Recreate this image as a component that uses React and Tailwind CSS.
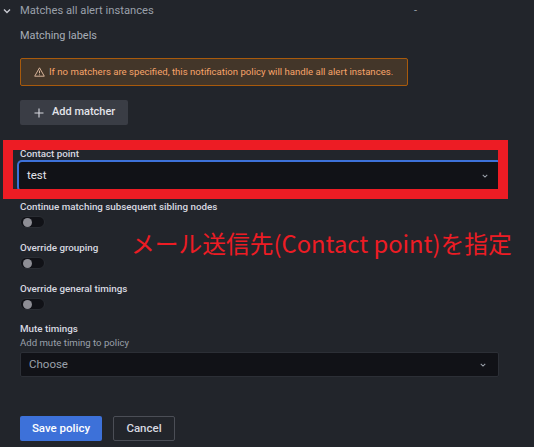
import React from "react";

function Chevron({ className }) {
  return (
    <svg className={className} width="8" height="6" viewBox="0 0 8 6" fill="none">
      <path d="M1 1.5 L4 4.5 L7 1.5" stroke="currentColor" strokeWidth="1.4" />
    </svg>
  );
}

function Toggle() {
  return (
    <div className="mt-[2px] w-[25px] h-[12px] rounded-full bg-[#111217] border border-[#2a2d33] flex items-center pl-[2px]">
      <div className="w-[9px] h-[9px] rounded-full bg-[#8e8e95]" />
    </div>
  );
}

function Label({ children, className = "" }) {
  return (
    <div className={`h-[14px] flex items-center text-[9.8px] font-medium text-[#d8d9e0] whitespace-nowrap ${className}`}>{children}</div>
  );
}

export default function App() {
  return (
    <div
      className="relative w-[534px] h-[447px] overflow-hidden bg-[#22252b]"
      style={{ fontFamily: "Roboto, 'Noto Sans', sans-serif" }}
    >
      <div className="flex flex-col">
        <div className="h-[22px] flex items-center">
          <Chevron className="ml-[3px] text-[#c7c9d1]" />
          <span className="ml-[9px] w-[394px] text-[11.2px] text-[#9aa0aa] whitespace-nowrap">Matches all alert instances</span>
          <span className="text-[11px] text-[#9aa0aa]">-</span>
        </div>
        <div className="mt-[3px] h-[22px] flex items-center pl-[20px] text-[10.9px] text-[#a7adb7]">Matching labels</div>
        <div className="ml-[20px] mt-[11px] w-[388px] h-[28px] rounded-[2px] border border-[#a85a0c] bg-[#433629] flex items-center pl-[13px]">
          <svg width="11" height="10" viewBox="0 0 11 10" fill="none">
            <path d="M5.5 0.8 L10.3 9.2 H0.7 Z" stroke="#d8b49a" strokeWidth="1" strokeLinejoin="round" />
            <path d="M5.5 3.6 V6.3" stroke="#d8b49a" strokeWidth="1" />
            <circle cx="5.5" cy="7.7" r="0.55" fill="#d8b49a" />
          </svg>
          <span className="ml-[4px] text-[9.6px] text-[#f7a46a] whitespace-nowrap">
            If no matchers are specified, this notification policy will handle all alert instances.
          </span>
        </div>
        <div className="ml-[20px] mt-[14px] w-[108px] h-[25px] rounded-[2px] bg-[#3a3d45] flex items-center pl-[14px]">
          <svg width="10" height="10" viewBox="0 0 10 10">
            <path d="M5 0.5 V9.5 M0.5 5 H9.5" stroke="#d8d9e0" strokeWidth="1.1" />
          </svg>
          <span className="ml-[8px] text-[11px] font-medium text-[#e3e4ea]">Add matcher</span>
        </div>

        <Label className="ml-[20px] mt-[22px]">Contact point</Label>
        <div className="ml-[20px] mt-[2px] w-[479px] h-[26px] rounded-[2px] bg-[#111217] ring-2 ring-[#3d71d9] ring-offset-1 ring-offset-[#111217] flex items-center justify-between px-[7px]">
          <span className="text-[11.5px] text-[#e3e4ea]">test</span>
          <Chevron className="mr-[3px] text-[#9aa0aa] scale-75" />
        </div>

        <Label className="ml-[20px] mt-[11px]">Continue matching subsequent sibling nodes</Label>
        <div className="ml-[20px]"><Toggle /></div>

        <Label className="ml-[20px] mt-[13px]">Override grouping</Label>
        <div className="ml-[20px]"><Toggle /></div>

        <Label className="ml-[20px] mt-[13px]">Override general timings</Label>
        <div className="ml-[20px]"><Toggle /></div>

        <Label className="ml-[20px] mt-[12px]">Mute timings</Label>
        <div className="ml-[20px] h-[14px] flex items-center text-[9.6px] text-[#9aa0aa]">Add mute timing to policy</div>
        <div className="ml-[20px] mt-[2px] w-[479px] h-[25px] rounded-[2px] bg-[#111217] border border-[#2c2f36] flex items-center justify-between px-[8px]">
          <span className="text-[11.5px] text-[#9aa0aa]">Choose</span>
          <Chevron className="mr-[3px] text-[#9aa0aa] scale-75" />
        </div>

        <div className="ml-[20px] mt-[39px] flex gap-[11px]">
          <div className="w-[82px] h-[25px] rounded-[2px] bg-[#3d71d9] flex items-center justify-center text-[11.5px] font-medium text-white">Save policy</div>
          <div className="w-[62px] h-[25px] rounded-[2px] border border-[#4b4e56] flex items-center justify-center text-[11.5px] font-medium text-[#d8d9e0]">Cancel</div>
        </div>
      </div>

      <div className="absolute left-[3px] top-[140px] w-[505px] h-[59px] border-[10px] border-[#ed1c24] pointer-events-none" />
      <div
        className="absolute left-[131px] top-[226px] text-[23.75px] leading-[34px] text-[#ed1c24] whitespace-nowrap"
        style={{ fontFamily: "'Noto Sans CJK JP', 'Noto Sans', sans-serif" }}
      >
        メール送信先(Contact point)を指定
      </div>
    </div>
  );
}
